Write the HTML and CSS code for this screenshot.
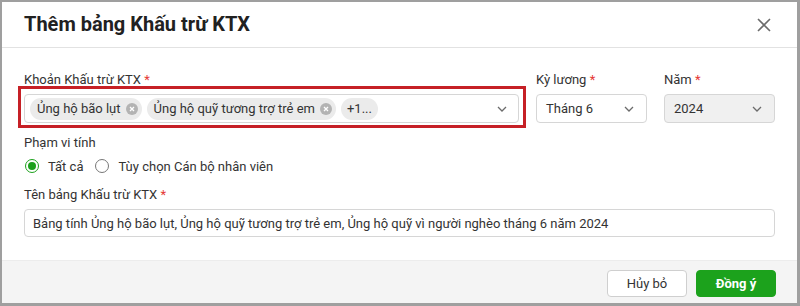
FILE: index.html
```html
<!DOCTYPE html>
<html lang="vi">
<head>
<meta charset="utf-8">
<title>Thêm bảng Khấu trừ KTX</title>
<link rel="stylesheet" href="styles.css">
</head>
<body>
<div class="frame">
  <div class="dialog">
    <div class="header">
      <div class="title">Thêm bảng Khấu trừ KTX</div>
      <button class="close" aria-label="Đóng">
        <svg width="14" height="14" viewBox="0 0 14 14"><path d="M1 1L13 13M13 1L1 13" stroke="#6b6b6b" stroke-width="1.6" fill="none"/></svg>
      </button>
    </div>
    <div class="body">
      <div class="row3">
        <div class="field">
          <div class="label">Khoản Khấu trừ KTX <span class="req">*</span></div>
          <div class="select-wrap">
            <div class="select multi">
              <div class="chips">
                <span class="chip">Ủng hộ bão lụt<span class="chip-x"><svg width="12" height="12" viewBox="0 0 12 12"><circle cx="6" cy="6" r="6" fill="#b3b3b3"/><path d="M4 4L8 8M8 4L4 8" stroke="#fff" stroke-width="1.3"/></svg></span></span>
                <span class="chip">Ủng hộ quỹ tương trợ trẻ em<span class="chip-x"><svg width="12" height="12" viewBox="0 0 12 12"><circle cx="6" cy="6" r="6" fill="#b3b3b3"/><path d="M4 4L8 8M8 4L4 8" stroke="#fff" stroke-width="1.3"/></svg></span></span>
                <span class="chip more">+1...</span>
              </div>
              <svg class="chev" width="10" height="6" viewBox="0 0 10 6"><path d="M1 1L5 5L9 1" stroke="#6b6b6b" stroke-width="1.3" fill="none"/></svg>
            </div>
            <div class="highlight"></div>
          </div>
        </div>
        <div class="field">
          <div class="label">Kỳ lương <span class="req">*</span></div>
          <div class="select">
            <span class="val">Tháng 6</span>
            <svg class="chev" width="10" height="6" viewBox="0 0 10 6"><path d="M1 1L5 5L9 1" stroke="#6b6b6b" stroke-width="1.3" fill="none"/></svg>
          </div>
        </div>
        <div class="field">
          <div class="label">Năm <span class="req">*</span></div>
          <div class="select disabled">
            <span class="val">2024</span>
            <svg class="chev" width="10" height="6" viewBox="0 0 10 6"><path d="M1 1L5 5L9 1" stroke="#6b6b6b" stroke-width="1.3" fill="none"/></svg>
          </div>
        </div>
      </div>
      <div class="label scope">Phạm vi tính</div>
      <div class="radios">
        <label class="radio"><span class="dot checked"></span>Tất cả</label>
        <label class="radio"><span class="dot"></span>Tùy chọn Cán bộ nhân viên</label>
      </div>
      <div class="label name-label">Tên bảng Khấu trừ KTX <span class="req">*</span></div>
      <div class="input">Bảng tính Ủng hộ bão lụt, Ủng hộ quỹ tương trợ trẻ em, Ủng hộ quỹ vì người nghèo tháng 6 năm 2024</div>
    </div>
    <div class="footer">
      <button class="btn cancel">Hủy bỏ</button>
      <button class="btn ok">Đồng ý</button>
    </div>
  </div>
</div>
</body>
</html>
```

FILE: styles.css
```css
* { box-sizing: border-box; }
html, body { margin: 0; padding: 0; }
body {
  width: 800px;
  height: 306px;
  background: #9f9f9f;
  font-family: Roboto, "Noto Sans", "Liberation Sans", sans-serif;
  color: #333;
  font-size: 13px;
}
.frame {
  padding: 2px 3px 3px 2px;
  height: 306px;
}
.dialog {
  background: #fff;
  height: 301px;
  display: flex;
  flex-direction: column;
}
.header {
  height: 46px;
  flex: none;
  border-bottom: 1px solid #e2e2e2;
  display: flex;
  align-items: center;
  justify-content: space-between;
  padding: 0 26px 0 22px;
}
.title {
  font-size: 20px;
  font-weight: 700;
  color: #212121;
  margin-top: -1px;
}
.close {
  border: 0;
  background: none;
  padding: 0;
  width: 14px;
  height: 14px;
  display: flex;
}
.body {
  flex: 1;
  padding: 24px 22px 0 22px;
}
.row3 {
  display: grid;
  grid-template-columns: 1fr 111px 111px;
  column-gap: 17px;
}
.label {
  line-height: 16px;
  height: 16px;
  color: #333;
}
.req { color: #e53935; }
.field .label { margin-bottom: 6px; }
.select-wrap { position: relative; }
.highlight {
  position: absolute;
  left: -6px;
  right: -7px;
  top: -8px;
  bottom: -5px;
  border: 3px solid #c62026;
  pointer-events: none;
}
.select {
  height: 29px;
  border: 1px solid #d6d6d6;
  border-radius: 4px;
  display: flex;
  align-items: center;
  justify-content: space-between;
  padding: 0 12px 0 9px;
}
.select.multi { padding: 0 11px 0 5px; }
.select.disabled { background: #f0f0f0; }
.chips {
  display: flex;
  gap: 5px;
  align-items: center;
}
.chip {
  display: inline-flex;
  align-items: center;
  height: 22px;
  border-radius: 11px;
  background: #ebebeb;
  padding: 0 4px 0 7px;
  gap: 5px;
  white-space: nowrap;
}
.chip.more { padding: 0 6px 0 6px; }
.chip-x { display: flex; }
.chev { flex: none; }
.scope { margin-top: 12px; }
.radios {
  display: flex;
  align-items: center;
  margin-top: 7px;
  height: 16px;
  gap: 11px;
}
.radio {
  display: flex;
  align-items: center;
  gap: 9px;
}
.dot {
  width: 14px;
  height: 14px;
  border-radius: 50%;
  border: 1.5px solid #777;
  display: flex;
  align-items: center;
  justify-content: center;
  margin-left: 1px;
}
.dot.checked { border-color: #1ca11c; }
.dot.checked::after {
  content: "";
  width: 8px;
  height: 8px;
  border-radius: 50%;
  background: #1ca11c;
}
.name-label { margin-top: 13px; }
.input {
  margin-top: 6px;
  height: 28px;
  border: 1px solid #d6d6d6;
  border-radius: 4px;
  padding: 0 8px;
  display: flex;
  align-items: center;
  white-space: nowrap;
}
.footer {
  height: 43px;
  flex: none;
  background: #f4f4f4;
  border-top: 1px solid #ececec;
  display: flex;
  justify-content: flex-end;
  align-items: flex-start;
  padding: 9px 21px 0 0;
  gap: 9px;
}
.btn {
  height: 27px;
  width: 80px;
  border-radius: 4px;
  font-family: inherit;
  font-size: 13px;
  padding: 0;
}
.cancel {
  background: #fff;
  border: 1px solid #cfcfcf;
  color: #333;
}
.ok {
  background: #1ca21c;
  border: 1px solid #1ca21c;
  color: #fff;
  font-weight: 700;
}
```
